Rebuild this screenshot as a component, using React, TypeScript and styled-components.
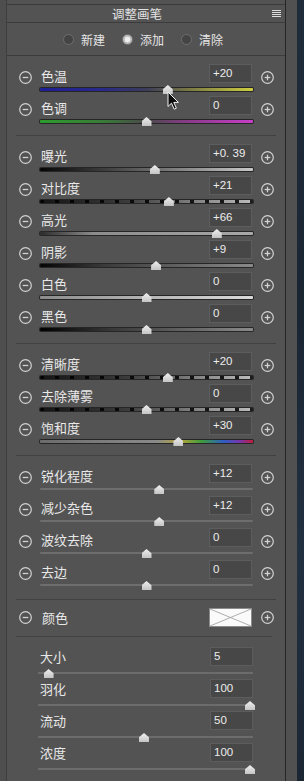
import React from "react";
import styled, { createGlobalStyle, css } from "styled-components";

type TrackKind =
    | "temp"
    | "tint"
    | "exposure"
    | "contrast"
    | "highlights"
    | "shadows"
    | "whites"
    | "blacks"
    | "texture"
    | "saturation"
    | "plain";

interface IAdjust {
    label: string;
    value: string;
    pos: number;
    track: TrackKind;
}

const sections: IAdjust[][] = [
    [
        { label: "色温", value: "+20", pos: 0.6, track: "temp" },
        { label: "色调", value: "0", pos: 0.5, track: "tint" },
    ],
    [
        { label: "曝光", value: "+0. 39", pos: 0.539, track: "exposure" },
        { label: "对比度", value: "+21", pos: 0.605, track: "contrast" },
        { label: "高光", value: "+66", pos: 0.83, track: "highlights" },
        { label: "阴影", value: "+9", pos: 0.545, track: "shadows" },
        { label: "白色", value: "0", pos: 0.5, track: "whites" },
        { label: "黑色", value: "0", pos: 0.5, track: "blacks" },
    ],
    [
        { label: "清晰度", value: "+20", pos: 0.6, track: "texture" },
        { label: "去除薄雾", value: "0", pos: 0.5, track: "texture" },
        { label: "饱和度", value: "+30", pos: 0.65, track: "saturation" },
    ],
    [
        { label: "锐化程度", value: "+12", pos: 0.56, track: "plain" },
        { label: "减少杂色", value: "+12", pos: 0.56, track: "plain" },
        { label: "波纹去除", value: "0", pos: 0.5, track: "plain" },
        { label: "去边", value: "0", pos: 0.5, track: "plain" },
    ],
];

const brush = [
    { label: "大小", value: 5 },
    { label: "羽化", value: 100 },
    { label: "流动", value: 50 },
    { label: "浓度", value: 100 },
];

const MinusIcon = () => (
    <svg width="13" height="13" viewBox="0 0 13 13">
        <circle cx="6.5" cy="6.5" r="5.8" fill="none" stroke="#d2d2d2" strokeWidth="1.2" />
        <line x1="3.7" y1="6.5" x2="9.3" y2="6.5" stroke="#d2d2d2" strokeWidth="1.3" />
    </svg>
);

const PlusIcon = () => (
    <svg width="13" height="13" viewBox="0 0 13 13">
        <circle cx="6.5" cy="6.5" r="5.8" fill="none" stroke="#d2d2d2" strokeWidth="1.2" />
        <line x1="3.7" y1="6.5" x2="9.3" y2="6.5" stroke="#d2d2d2" strokeWidth="1.3" />
        <line x1="6.5" y1="3.7" x2="6.5" y2="9.3" stroke="#d2d2d2" strokeWidth="1.3" />
    </svg>
);

const App: React.FC = () => {
    return (
        <Screen>
            <GlobalStyle />
            <LeftRail />
            <Panel>
                <Header>
                    <Title>调整画笔</Title>
                    <Menu>
                        <i />
                        <i />
                        <i />
                        <i />
                    </Menu>
                </Header>
                <RadioRow>
                    <RadioItem>
                        <Radio />
                        新建
                    </RadioItem>
                    <RadioItem>
                        <Radio $checked />
                        添加
                    </RadioItem>
                    <RadioItem>
                        <Radio />
                        清除
                    </RadioItem>
                </RadioRow>

                {sections.map((rows, i) => (
                    <Section key={i}>
                        {rows.map((r) => (
                            <Row key={r.label}>
                                <IconCell>
                                    <MinusIcon />
                                </IconCell>
                                <Label>{r.label}</Label>
                                <ValueBox>{r.value}</ValueBox>
                                <IconCell>
                                    <PlusIcon />
                                </IconCell>
                                <Track $kind={r.track}>
                                    <Thumb style={{ left: `${r.pos * 100}%` }} />
                                </Track>
                            </Row>
                        ))}
                    </Section>
                ))}

                <ColorSection>
                    <ColorRow>
                        <MinusIcon />
                        <Label>颜色</Label>
                        <Swatch>
                            <svg width="100%" height="100%" viewBox="0 0 42 17" preserveAspectRatio="none">
                                <line x1="0" y1="0" x2="42" y2="17" stroke="#9a9a9a" strokeWidth="0.8" />
                                <line x1="42" y1="0" x2="0" y2="17" stroke="#9a9a9a" strokeWidth="0.8" />
                            </svg>
                        </Swatch>
                        <PlusIcon />
                    </ColorRow>
                </ColorSection>

                <BrushSection>
                    {brush.map((b) => (
                        <BrushRow key={b.label}>
                            <BrushLabel>{b.label}</BrushLabel>
                            <ValueBox>{b.value}</ValueBox>
                            <BrushTrack>
                                <Thumb style={{ left: `${(b.value / 100) * 98.6}%` }} />
                            </BrushTrack>
                        </BrushRow>
                    ))}
                </BrushSection>
            </Panel>
            <EdgeLine />
            <Gutter />
            <Backdrop />
            <Cursor width="13" height="20" viewBox="0 0 13 20">
                <path
                    d="M1 1 L1 15.5 L4.5 12.2 L7.2 18.2 L9.4 17.2 L6.8 11.4 L11.4 11.4 Z"
                    fill="#0c0c0c"
                    stroke="#f2f2f2"
                    strokeWidth="1"
                    strokeLinejoin="round"
                />
            </Cursor>
        </Screen>
    );
};

const GlobalStyle = createGlobalStyle`
    html, body {
        margin: 0;
        padding: 0;
        background: #1c2733;
    }

    body {
        font-family: "Noto Sans CJK SC", "Noto Sans", sans-serif;
    }
`;

const Screen = styled.div`
    position: relative;
    display: flex;
    width: 304px;
    height: 781px;
    overflow: hidden;
    background: #535353;
`;

const LeftRail = styled.div`
    width: 6px;
    flex-shrink: 0;
    background: #4e4e4e;
    border-right: 1px solid #3e3e3e;
`;

const Panel = styled.div`
    width: 278px;
    flex-shrink: 0;
    display: flex;
    flex-direction: column;
    background: #535353;
    color: #e6e6e6;
`;

const EdgeLine = styled.div`
    width: 1px;
    flex-shrink: 0;
    background: #262626;
`;

const Gutter = styled.div`
    width: 11px;
    flex-shrink: 0;
    background: #515151;
`;

const Backdrop = styled.div`
    flex: 1;
    background: linear-gradient(180deg, #1f2c3a 0%, #1a2532 40%, #213041 70%, #1b2633 100%);
`;

const Header = styled.div`
    position: relative;
    margin-top: 4px;
    height: 17px;
    border-top: 1px solid #3c3c3c;
    border-bottom: 1px solid #3c3c3c;
    display: flex;
    align-items: center;
    justify-content: center;
    padding-right: 18px;
`;

const Title = styled.span`
    font-size: 12.5px;
    line-height: 17px;
    color: #e2e2e2;
`;

const Menu = styled.span`
    position: absolute;
    right: 4px;
    top: 5px;
    display: flex;
    flex-direction: column;
    gap: 1px;

    i {
        display: block;
        width: 9px;
        height: 1px;
        background: #dcdcdc;
    }
`;

const RadioRow = styled.div`
    height: 32px;
    border-bottom: 1px solid #3c3c3c;
    display: flex;
    align-items: center;
    justify-content: center;
    gap: 17px;
    padding-right: 6px;
`;

const RadioItem = styled.label`
    display: flex;
    align-items: center;
    gap: 7px;
    font-size: 12px;
    color: #e6e6e6;
`;

const Radio = styled.span<{ $checked?: boolean }>`
    width: 11px;
    height: 11px;
    box-sizing: border-box;
    border-radius: 50%;
    border: 1px solid #6e6e6e;
    background: #444444;

    ${(p) =>
        p.$checked &&
        css`
            background: radial-gradient(circle, #eeeeee 0 2.5px, #bdbdbd 3.2px);
            border-color: #777777;
        `}
`;

const Section = styled.div`
    padding: 8px 0 7px;
    margin: 0 9px;
    border-bottom: 1px solid #424242;

    && {
        padding-left: 0;
    }
`;

const Row = styled.div`
    display: grid;
    grid-template-columns: 13px 1fr 43px 13px;
    grid-template-rows: 19px 13px;
    column-gap: 9px;
    margin: 0 -9px;
    padding: 0 11px 0 12px;
`;

const IconCell = styled.div`
    grid-row: 1 / 3;
    align-self: start;
    margin-top: 7px;
    width: 13px;
    height: 13px;
    display: flex;

    &:last-of-type {
        grid-column: 4;
    }
`;

const Label = styled.span`
    font-size: 13px;
    line-height: 19px;
    padding-top: 2px;
    color: #e8e8e8;
    white-space: nowrap;
`;

const ValueBox = styled.div`
    height: 19px;
    box-sizing: border-box;
    background: #474747;
    border: 1px solid #5d5d5d;
    padding: 0 3px;
    font-family: "Liberation Sans", "Noto Sans", sans-serif;
    font-size: 11.5px;
    line-height: 16px;
    color: #ececec;
`;

const trackFill: Record<TrackKind, string> = {
    temp: "linear-gradient(90deg, #1e1e96 0%, #2a2a88 30%, #3c3c5a 50%, #7a7a44 70%, #cfcf40 100%)",
    tint: "linear-gradient(90deg, #2c9c2c 0%, #3a7a3a 30%, #4a4a4a 50%, #8a3a8a 70%, #c83ec8 100%)",
    exposure: "linear-gradient(90deg, #050505 0%, #5a5a5a 45%, #c8c8c8 100%)",
    contrast:
        "repeating-linear-gradient(90deg, rgba(0,0,0,0.85) 0 4px, transparent 4px 15px), linear-gradient(90deg, #141414 0%, #3a3a3a 40%, #bdbdbd 100%)",
    highlights: "linear-gradient(90deg, #2c2c2c 0%, #8c8c8c 25%, #a8a8a8 100%)",
    shadows: "linear-gradient(90deg, #050505 0%, #3a3a3a 30%, #8a8a8a 100%)",
    whites: "linear-gradient(90deg, #8c8c8c 0%, #b4b4b4 50%, #dadada 100%)",
    blacks: "linear-gradient(90deg, #000000 0%, #3a3a3a 35%, #8a8a8a 100%)",
    texture:
        "repeating-linear-gradient(90deg, rgba(0,0,0,0.85) 0 4px, transparent 4px 15px), linear-gradient(90deg, #141414 0%, #3a3a3a 40%, #bdbdbd 100%)",
    saturation:
        "linear-gradient(90deg, #6c6c6c 0%, #8a8a8a 55%, #b4a43c 66%, #3c9c3c 76%, #2e5ec2 86%, #7a34a8 94%, #c41c3c 100%)",
    plain: "#6e6e6e",
};

const Track = styled.div<{ $kind: TrackKind }>`
    position: relative;
    grid-column: 2 / 4;
    grid-row: 2;
    margin: 5px -1px 0;
    height: ${(p) => (p.$kind === "plain" ? "2px" : "3px")};
    border-radius: 1px;
    background: ${(p) => trackFill[p.$kind]};
    box-shadow: ${(p) => (p.$kind === "plain" ? "none" : "0 0 0 1px rgba(20, 20, 20, 0.7)")};
`;

const Thumb = styled.span`
    position: absolute;
    top: -3px;
    width: 10px;
    height: 9px;
    transform: translateX(-50%);
    background: linear-gradient(180deg, #f0f0f0, #c4c4c4);
    clip-path: polygon(50% 0, 100% 48%, 100% 100%, 0 100%, 0 48%);
`;

const ColorSection = styled.div`
    padding: 8px 0 9px;
    margin: 0 13px 0 9px;
    border-bottom: 1px solid #424242;
`;

const ColorRow = styled.div`
    display: grid;
    grid-template-columns: 13px 1fr 43px 13px;
    align-items: center;
    column-gap: 9px;
    margin: 0 -13px 0 -9px;
    padding: 0 11px 0 12px;

    ${Label} {
        padding-top: 0;
        padding-left: 1px;
    }
`;

const Swatch = styled.div`
    height: 19px;
    box-sizing: border-box;
    background: #fafafa;
    border: 1px solid #8c8c8c;
    display: flex;
`;

const BrushSection = styled.div`
    padding: 10px 32px 0 31px;
`;

const BrushRow = styled.div`
    display: grid;
    grid-template-columns: 1fr 43px;
    grid-template-rows: 19px 13px;
`;

const BrushLabel = styled.span`
    font-size: 13px;
    line-height: 19px;
    padding-left: 2px;
    color: #e8e8e8;
`;

const BrushTrack = styled.div`
    position: relative;
    grid-column: 1 / 3;
    grid-row: 2;
    margin-top: 6px;
    height: 2px;
    background: #6c6c6c;
`;

const Cursor = styled.svg`
    position: absolute;
    left: 167px;
    top: 91px;
`;

export default App;
